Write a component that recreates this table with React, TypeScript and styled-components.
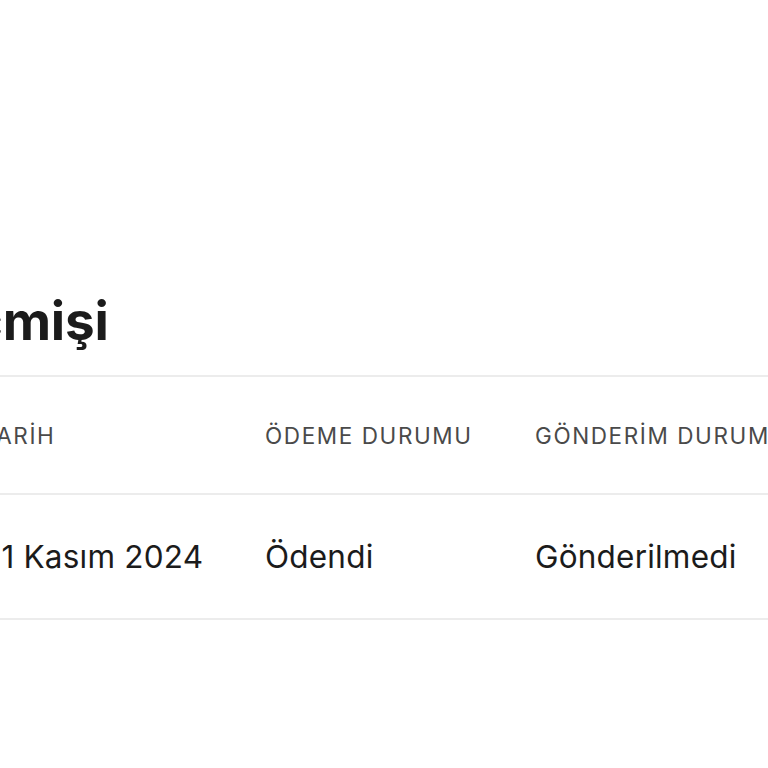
import React from 'react';
import styled, { createGlobalStyle } from 'styled-components';

const GlobalStyle = createGlobalStyle`
  html, body {
    margin: 0;
    padding: 0;
    background: #ffffff;
    overflow: hidden;
  }
  body {
    font-family: Inter, "Noto Sans", "Liberation Sans", sans-serif;
    color: #1b1b1b;
  }
`;

const Page = styled.div`
  width: 1400px;
  margin-left: -290px;
  padding-top: 290px;
`;

const Title = styled.h2`
  font-size: 53px;
  line-height: 62px;
  font-weight: 700;
  letter-spacing: -0.2px;
  margin: 0 0 23px;
  color: #1b1b1b;
`;

const Table = styled.table`
  width: 100%;
  border-collapse: collapse;
  table-layout: fixed;
  border-top: 2px solid #ececec;
`;

const HeadCell = styled.th<{ $width?: number }>`
  width: ${(p) => (p.$width ? `${p.$width}px` : 'auto')};
  height: 116px;
  padding: 0;
  text-align: left;
  vertical-align: middle;
  font-size: 22.5px;
  font-weight: 400;
  letter-spacing: 1.6px;
  text-transform: uppercase;
  color: #4a4a4a;
  border-bottom: 2px solid #ececec;
`;

const Cell = styled.td`
  height: 123px;
  padding: 0;
  vertical-align: middle;
  font-size: 31.5px;
  font-weight: 400;
  letter-spacing: 0.2px;
  color: #1b1b1b;
  border-bottom: 2px solid #ececec;
`;

const orders = [
  {
    no: '#10245',
    date: '21 Kasım 2024',
    payment: 'Ödendi',
    shipping: 'Gönderilmedi',
    total: '₺1.250,00',
  },
];

const App = () => {
  return (
    <>
      <GlobalStyle />
      <Page>
        <Title>Sipariş Geçmişi</Title>
        <Table>
          <thead>
            <tr>
              <HeadCell $width={272}>SİPARİŞ</HeadCell>
              <HeadCell $width={283}>TARİH</HeadCell>
              <HeadCell $width={270}>ÖDEME DURUMU</HeadCell>
              <HeadCell $width={330}>GÖNDERİM DURUMU</HeadCell>
              <HeadCell>TOPLAM</HeadCell>
            </tr>
          </thead>
          <tbody>
            {orders.map((o) => (
              <tr key={o.no}>
                <Cell>{o.no}</Cell>
                <Cell>{o.date}</Cell>
                <Cell>{o.payment}</Cell>
                <Cell>{o.shipping}</Cell>
                <Cell>{o.total}</Cell>
              </tr>
            ))}
          </tbody>
        </Table>
      </Page>
    </>
  );
};

export default App;
